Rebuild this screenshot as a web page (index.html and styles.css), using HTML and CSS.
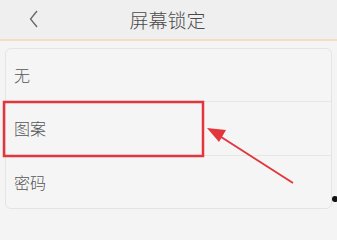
FILE: index.html
```html
<!DOCTYPE html>
<html lang="zh">
<head>
<meta charset="utf-8">
<link rel="stylesheet" href="styles.css">
</head>
<body>
<div class="screen">
  <header class="topbar">
    <span class="back">
      <svg width="10" height="18" viewBox="0 0 10 18"><path d="M8 1 L1.5 9 L8 17" fill="none" stroke="#666" stroke-width="1.3"/></svg>
    </span>
    <h1 class="title">屏幕锁定</h1>
  </header>
  <main class="content">
    <ul class="card">
      <li class="row">无</li>
      <li class="row">图案</li>
      <li class="row">密码</li>
    </ul>
  </main>
  <svg class="annot" width="337" height="211" viewBox="0 0 337 211">
    <rect x="4" y="102" width="199" height="54" fill="none" stroke="#e2363c" stroke-width="2.5"/>
    <line x1="293" y1="183" x2="218" y2="135" stroke="#e2363c" stroke-width="1.8"/>
    <polygon points="207,128 226,130 219,142" fill="#e2363c"/>
  </svg>
  <span class="dot"></span>
</div>
</body>
</html>
```
FILE: styles.css
```css
html, body {
  margin: 0;
  padding: 0;
}
body {
  background: #f4f4f4;
  font-family: "Noto Sans CJK SC", "Noto Sans", sans-serif;
  width: 337px;
  height: 211px;
  overflow: hidden;
}
.screen {
  position: relative;
  width: 337px;
  height: 211px;
}
.topbar {
  height: 39px;
  background: #efefef;
  border-bottom: 2px solid #f2dccb;
  box-shadow: 0 1px 0 #fbf3ea;
  display: flex;
  align-items: center;
  position: relative;
}
.back {
  position: absolute;
  left: 29px;
  top: 10px;
  display: flex;
}
.title {
  margin: 0 auto;
  font-size: 19px;
  font-weight: 300;
  color: #4a4a4a;
  transform: translateX(-1px);
}
.content {
  padding: 7px 5px 0 5px;
}
.card {
  list-style: none;
  margin: 0;
  padding: 0;
  background: #f5f5f5;
  border: 1px solid #e4e4e4;
  border-radius: 6px;
  height: 161px;
  box-sizing: border-box;
  display: flex;
  flex-direction: column;
}
.row {
  flex: 1;
  display: flex;
  align-items: center;
  padding-left: 8px;
  font-size: 16px;
  font-weight: 300;
  color: #555;
  border-bottom: 1px solid #e6e6e6;
}
.row:last-child {
  border-bottom: none;
}
.annot {
  position: absolute;
  left: 0;
  top: 0;
  pointer-events: none;
}
.dot {
  position: absolute;
  left: 332px;
  top: 196px;
  width: 6px;
  height: 6px;
  border-radius: 50%;
  background: #111;
}
```
